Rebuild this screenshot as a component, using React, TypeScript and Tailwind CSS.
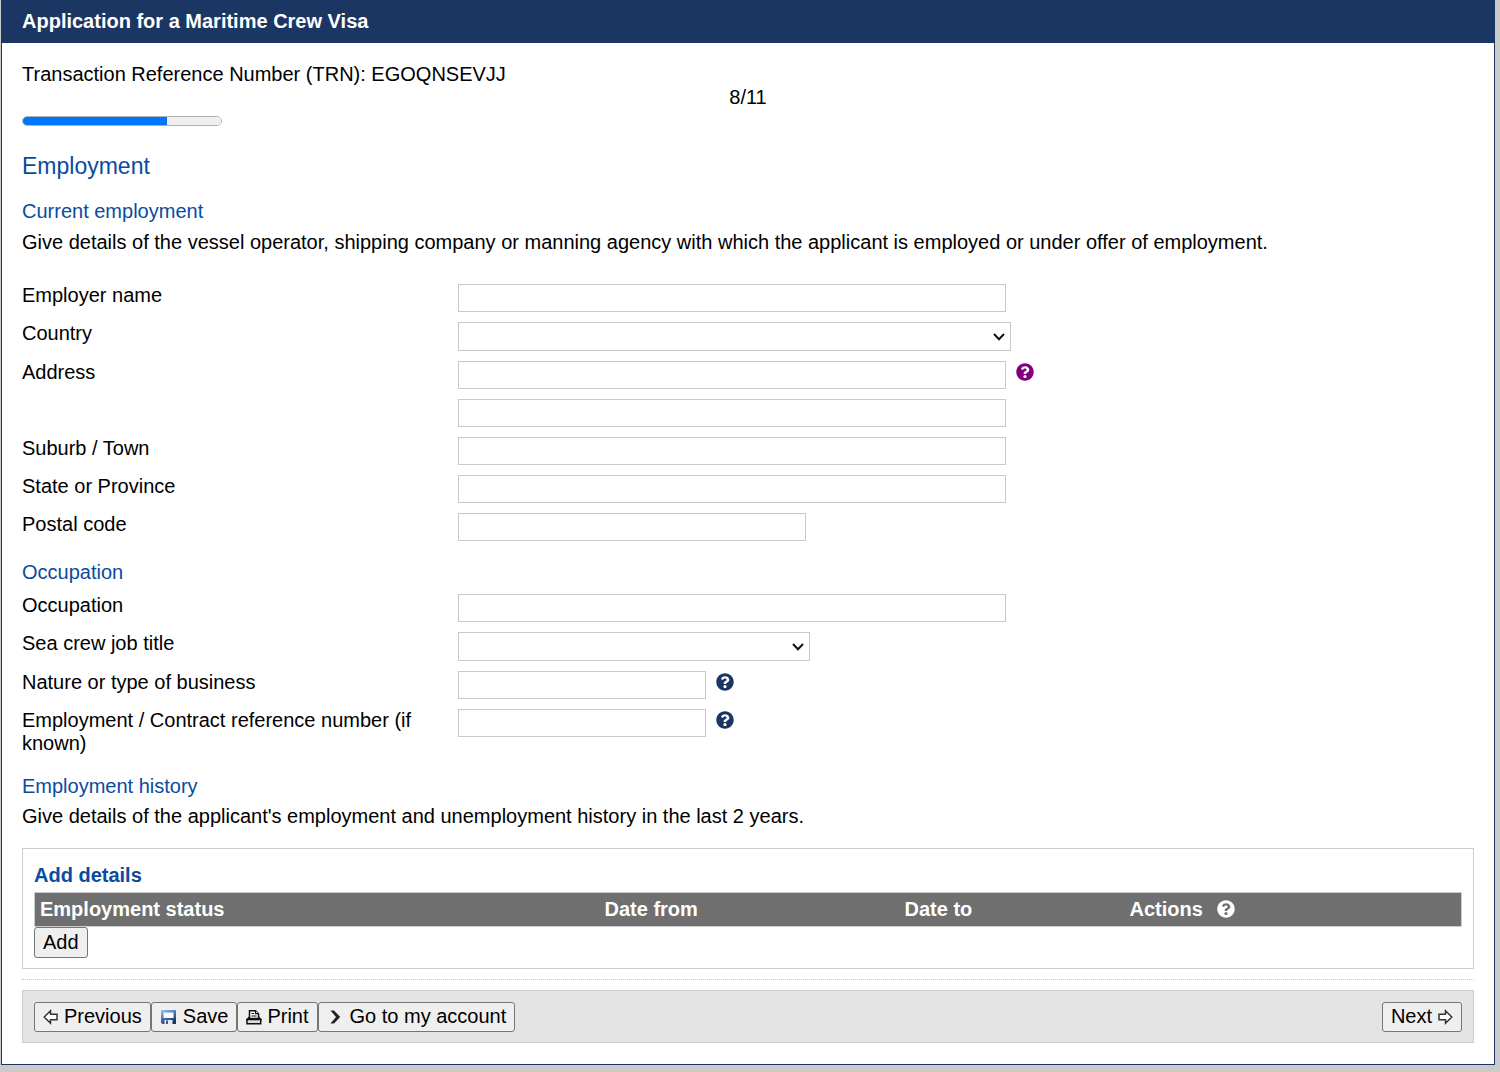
import { ReactNode } from 'react';
import { FaQuestionCircle } from 'react-icons/fa';
import clsx from 'clsx';

const ArrowLeft = () => (
  <svg className="w-4 h-4 shrink-0" viewBox="0 0 16 16" fill="#fff" stroke="#333" strokeWidth="1.5">
    <path d="M1.200 8 7.500 1.800v3.500h6.500v5.400H7.500v3.500z" />
  </svg>
);

const ArrowRight = () => (
  <svg className="w-4 h-4 shrink-0" viewBox="0 0 16 16" fill="#fff" stroke="#333" strokeWidth="1.5">
    <path d="M14.800 8 8.500 1.800v3.500H2v5.400h6.500v3.500z" />
  </svg>
);

const SaveIcon = () => (
  <svg className="w-4 h-4 mx-px shrink-0" viewBox="0 0 16 16">
    <defs>
      <linearGradient id="disk" x1="0" y1="0" x2="0.5" y2="1">
        <stop offset="0" stopColor="#9ccdf0" />
        <stop offset="0.5" stopColor="#4a78b8" />
        <stop offset="1" stopColor="#1e3464" />
      </linearGradient>
    </defs>
    <path d="M0 1h15v14H1.500L0 13.500z" fill="url(#disk)" />
    <path d="M2.500 3.500h10V9h-10z" fill="#f8fbff" />
    <path d="M3.500 11h8v4h-8z" fill="#e4eaf2" />
    <path d="M5 11.500h2V15H5z" fill="#3c5a8c" />
  </svg>
);

const PrintIcon = () => (
  <svg className="w-4 h-4 shrink-0" viewBox="0 0 16 16" fill="#fff" stroke="#111" strokeWidth="1.5">
    <path d="M3.500 9.500V1.700h6l3 3v4.800z" />
    <path d="M9.500 1.700v3h3M5.500 4.500H8M5.500 7h5" strokeWidth="1.200" />
    <path d="M3.500 8 1 10.500h13.700L12.500 8" fill="none" />
    <path d="M1 10.500h13.700v4.200H1z" fill="#ddd" />
  </svg>
);

const ChevronIcon = () => (
  <svg className="w-4 h-4 mx-px shrink-0" viewBox="0 0 16 16" fill="#222">
    <path d="M2.500 1.500H6L12.200 8 6 14.500H2.500L8 8z" />
  </svg>
);

interface HelpProps {
  label: string;
  className?: string;
}

const Help = ({ label, className }: HelpProps) => (
  <button type="button" aria-label={label} className={clsx('mt-[2px] shrink-0', className)}>
    <FaQuestionCircle className="size-[18px]" />
  </button>
);

interface RowProps {
  id: string;
  label?: string;
  children: ReactNode;
}

const Row = ({ id, label, children }: RowProps) => (
  <div className="flex items-start mb-[10px]">
    <div className="w-[30%] shrink-0 pr-6">
      {label && (
        <label htmlFor={id} className="block">
          {label}
        </label>
      )}
    </div>
    {children}
  </div>
);

interface FieldProps {
  id: string;
  className: string;
  hint?: string;
}

const TextField = ({ id, className, hint }: FieldProps) => (
  <input
    id={id}
    type="text"
    aria-label={hint}
    className={clsx('h-7 px-1 bg-white border border-[#c8c8c8]', className)}
  />
);

const SelectField = ({ id, className }: FieldProps) => (
  <div className={clsx('relative', className)}>
    <select id={id} className="block w-full h-[29px] px-1 appearance-none bg-white border border-[#c8c8c8]">
      <option value=""></option>
    </select>
    <svg
      className="absolute right-[6px] top-[11px] w-3 h-2 pointer-events-none"
      viewBox="0 0 12 8"
      fill="none"
      stroke="#111"
      strokeWidth="2"
    >
      <path d="m1 1 5 5.200L11 1" />
    </svg>
  </div>
);

const SubHeading = ({ children }: { children: ReactNode }) => (
  <h3 className="text-[#084c9e]">{children}</h3>
);

interface ActionButtonProps {
  icon?: ReactNode;
  iconEnd?: ReactNode;
  children: ReactNode;
}

const ActionButton = ({ icon, iconEnd, children }: ActionButtonProps) => (
  <button
    type="button"
    className="flex items-center h-[30px] gap-[5px] px-2 pb-px bg-[#efefef] border border-[#767676] rounded-[3px]"
  >
    {icon}
    <span>{children}</span>
    {iconEnd}
  </button>
);

export default function App() {
  return (
    <div className="min-h-screen bg-[#cbcbcb] pl-px pr-[5px] pb-[7px] font-['Liberation_Sans',Arial,sans-serif] text-[20px] leading-[23px] text-black">
      <div className="bg-white border border-t-0 border-[#1c3664]">
        <h1 className="bg-[#1c3664] text-white font-bold px-5 py-[10px]">
          Application for a Maritime Crew Visa
        </h1>

        <form className="px-5 pt-5 pb-[21px]">
          <p>Transaction Reference Number (TRN): EGOQNSEVJJ</p>
          <p className="text-center">8/11</p>
          <progress
            className="block mt-[7px] w-[200px] h-[10px] appearance-none overflow-hidden rounded-full border border-[#b2b2b2] bg-[#efefef] [&::-webkit-progress-bar]:bg-[#efefef] [&::-webkit-progress-value]:bg-[#0075ff]"
            value={8}
            max={11}
            aria-label="Progress"
          />

          <h2 className="mt-[26px] text-[23px] leading-7 text-[#084c9e]">Employment</h2>

          <div className="mt-5 mb-[30px]">
            <SubHeading>Current employment</SubHeading>
            <p className="mt-2">
              Give details of the vessel operator, shipping company or manning agency with which the
              applicant is employed or under offer of employment.
            </p>
          </div>

          <Row id="employer" label="Employer name">
            <TextField id="employer" className="w-[548px]" />
          </Row>
          <Row id="country" label="Country">
            <SelectField id="country" className="w-[553px]" />
          </Row>
          <Row id="address" label="Address">
            <TextField id="address" className="w-[548px]" />
            <Help label="Help for address" className="ml-[10px] text-[#800080]" />
          </Row>
          <Row id="address2">
            <TextField id="address2" className="w-[548px]" hint="Address line 2" />
          </Row>
          <Row id="suburb" label="Suburb / Town">
            <TextField id="suburb" className="w-[548px]" />
          </Row>
          <Row id="state" label="State or Province">
            <TextField id="state" className="w-[548px]" />
          </Row>
          <Row id="postcode" label="Postal code">
            <TextField id="postcode" className="w-[348px]" />
          </Row>

          <div className="mt-5 mb-[10px]">
            <SubHeading>Occupation</SubHeading>
          </div>

          <Row id="occupation" label="Occupation">
            <TextField id="occupation" className="w-[548px]" />
          </Row>
          <Row id="jobTitle" label="Sea crew job title">
            <SelectField id="jobTitle" className="w-[352px]" />
          </Row>
          <Row id="business" label="Nature or type of business">
            <TextField id="business" className="w-[248px]" />
            <Help label="Help for business" className="ml-[10px] text-[#1c3664]" />
          </Row>
          <Row id="contract" label="Employment / Contract reference number (if known)">
            <TextField id="contract" className="w-[248px]" />
            <Help label="Help for reference number" className="ml-[10px] text-[#1c3664]" />
          </Row>

          <div className="mt-5 mb-5">
            <SubHeading>Employment history</SubHeading>
            <p className="mt-[7px]">
              Give details of the applicant's employment and unemployment history in the last 2 years.
            </p>
          </div>

          <section className="px-[11px] pt-[15px] pb-[10px] border border-[#ccc]">
            <h4 className="font-bold text-[#084c9e]">Add details</h4>
            <table className="w-full mt-[5px] table-fixed border border-[#ccc] bg-[#6f6f6f] text-white text-left">
              <thead>
                <tr className="h-[34px]">
                  <th className="w-[565px] px-[5px]">Employment status</th>
                  <th className="w-[300px] px-[5px]">Date from</th>
                  <th className="w-[225px] px-[5px]">Date to</th>
                  <th className="px-[5px]">
                    <span className="flex items-start">
                      Actions
                      <Help label="Help for actions" className="ml-[14px]" />
                    </span>
                  </th>
                </tr>
              </thead>
            </table>
            <button
              type="button"
              className="block h-[31px] px-2 pb-px bg-[#efefef] border border-[#767676] rounded-[3px]"
            >
              Add
            </button>
          </section>

          <hr className="my-[10px] border-t border-dotted border-[#c8c8c8]" />

          <div className="flex justify-between px-[11px] pt-[11px] pb-[10px] border border-[#ccc] bg-[#e4e4e4]">
            <div className="flex">
              <ActionButton icon={<ArrowLeft />}>Previous</ActionButton>
              <ActionButton icon={<SaveIcon />}>Save</ActionButton>
              <ActionButton icon={<PrintIcon />}>Print</ActionButton>
              <ActionButton icon={<ChevronIcon />}>Go to my account</ActionButton>
            </div>
            <ActionButton iconEnd={<ArrowRight />}>Next</ActionButton>
          </div>
        </form>
      </div>
    </div>
  );
}
